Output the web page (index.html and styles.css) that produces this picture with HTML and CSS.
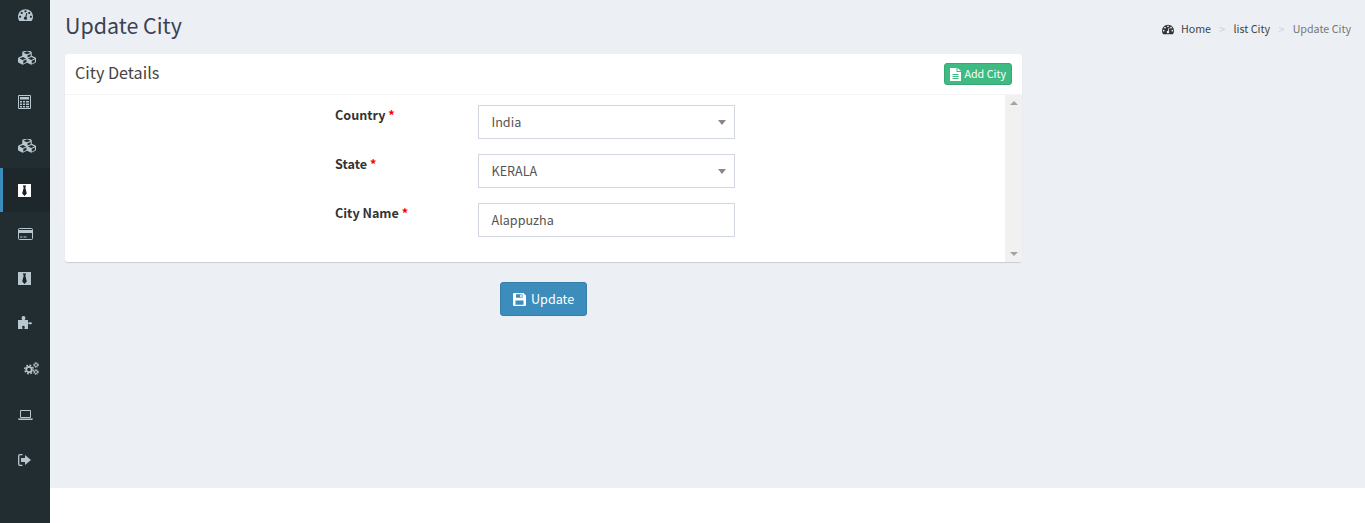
FILE: index.html
```html
<!DOCTYPE html>
<html lang="en">
<head>
<meta charset="utf-8">
<title>Update City</title>
<link rel="stylesheet" href="styles.css">
</head>
<body>
<svg class="defs" width="0" height="0" aria-hidden="true">
  <symbol id="i-dash" viewBox="0 0 1792 1792"><path d="M384 1152q0-53-37.500-90.500t-90.500-37.500-90.500 37.500-37.500 90.500 37.500 90.500 90.500 37.500 90.500-37.500 37.500-90.500zm192-448q0-53-37.500-90.500t-90.500-37.500-90.500 37.500-37.500 90.500 37.500 90.500 90.500 37.500 90.500-37.500 37.500-90.500zm428 481l101-382q6-26-7.500-48.500t-38.500-29.500-48 6.500-30 39.500l-101 382q-60 5-107 43.500t-63 98.500q-20 77 20 146t117 89 146-20 89-117q16-60-6-117t-72-91zm660-33q0-53-37.500-90.500t-90.500-37.500-90.500 37.500-37.500 90.500 37.500 90.500 90.500 37.500 90.500-37.500 37.500-90.500zm-640-640q0-53-37.500-90.500t-90.500-37.500-90.500 37.500-37.500 90.500 37.500 90.500 90.500 37.500 90.500-37.500 37.500-90.500zm448 192q0-53-37.500-90.500t-90.500-37.500-90.500 37.500-37.500 90.500 37.500 90.500 90.500 37.500 90.500-37.500 37.500-90.500zm320 448q0 261-141 483-19 29-54 29h-1402q-35 0-54-29-141-221-141-483 0-182 71-348t191-286 286-191 348-71 348 71 286 191 191 286 71 348z" fill="currentColor"/></symbol>
  <symbol id="i-cubes" viewBox="0 240 2176 1530"><path fill="currentColor" fill-rule="evenodd" d="M640 1632l384-192v-314l-384 164v342zm-64-454l404-173-404-173-404 173zm1088 454l384-192v-314l-384 164v342zm-64-454l404-173-404-173-404 173zm-448-293l384-165v-266l-384 164v267zm-64-379l441-189-441-189-441 189zm1088 483v416q0 36-19 67t-52 47l-448 224q-25 14-57 14t-57-14l-448-224q-5-2-7-4-2 2-7 4l-448 224q-25 14-57 14t-57-14l-448-224q-33-16-52-47t-19-67v-416q0-38 21.500-70t56.500-48l434-186v-400q0-38 21.500-70t56.500-48l448-192q23-10 50-10t50 10l448 192q35 16 56.500 48t21.500 70v400l434 186q36 16 57 48t21 70z"/></symbol>
  <symbol id="i-calc" viewBox="0 0 14 14"><path fill="none" stroke="currentColor" d="M.5.5h12v13H.5z"/><path fill="currentColor" d="M2 2h9v2.500H2zM2 6h2v1.500H2zM5 6h2v1.500H5zM8 6h3v1.500H8zM2 8.500h2V10H2zM5 8.500h2V10H5zM8 8.500h3V10H8zM2 11h2v1.500H2zM5 11h2v1.500H5zM8 11h3v1.500H8z"/></symbol>
  <symbol id="i-tie" viewBox="0 0 13 13"><rect width="13" height="13" fill="currentColor"/><path fill="#1a2226" d="M4.800 1.500h3.400L7.300 3.700l1.500 5.800-2.300 2.500-2.300-2.500 1.500-5.800z"/></symbol>
  <symbol id="i-card" viewBox="0 0 15 12"><path fill="none" stroke="currentColor" d="M1.500.5h12a1 1 0 0 1 1 1v9a1 1 0 0 1-1 1h-12a1 1 0 0 1-1-1v-9a1 1 0 0 1 1-1z"/><path fill="currentColor" d="M1 2h13v3H1zM2 8.500h2.500v1H2zM5.500 8.500h3v1h-3z"/></symbol>
  <symbol id="i-puzzle" viewBox="0 0 14 13"><path fill="currentColor" d="M0 4h3.800c.4 0 .4-.5 0-1-.5-.8-.3-3 1.700-3s2.200 2.200 1.700 3c-.4.500-.4 1 0 1H10v2.500c0 .4.500.4 1 0 .8-.5 3-.3 3 .8s-2.200 1.300-3 .8c-.5-.4-1-.4-1 0V13H6.800c-.4 0-.5-.5-.2-1 .5-.8.100-2.300-1.300-2.300S4 11.200 4.400 12c.3.500.2 1-.2 1H0z"/></symbol>
  <symbol id="i-cogs" viewBox="0 0 15 13"><g fill="none" stroke="currentColor"><circle cx="5" cy="7.500" r="2.700" stroke-width="1.700"/><circle cx="5" cy="7.500" r="4.200" stroke-width="1.500" stroke-dasharray="1.800 1.500"/><circle cx="12" cy="3" r="1.500" stroke-width="1"/><circle cx="12" cy="3" r="2.500" stroke-width="1" stroke-dasharray="1 1"/><circle cx="12" cy="10" r="1.500" stroke-width="1"/><circle cx="12" cy="10" r="2.500" stroke-width="1" stroke-dasharray="1 1"/></g></symbol>
  <symbol id="i-laptop" viewBox="0 0 15 10"><path fill="none" stroke="currentColor" d="M2.500.5h10v7h-10z"/><path fill="currentColor" d="M0 8.500h15v.5l-1 1H1l-1-1z"/></symbol>
  <symbol id="i-out" viewBox="0 0 13 12"><path fill="none" stroke="currentColor" stroke-width="1.300" d="M4.500.7H2A1.300 1.300 0 0 0 .7 2v8A1.300 1.300 0 0 0 2 11.300h2.500"/><path fill="currentColor" d="M7 1l6 5-6 5V8H3V4h4z"/></symbol>
  <symbol id="i-file" viewBox="0 0 11 13"><path fill="currentColor" d="M0 0h6.500v4H11v9H0z"/><path fill="currentColor" d="M7.500 0L11 3H7.500z"/><path stroke="#3fba82" d="M2.500 6.500h6M2.500 8.500h6M2.500 10.500h6"/></symbol>
  <symbol id="i-save" viewBox="0 0 13 13"><path fill="currentColor" fill-rule="evenodd" d="M0 1a1 1 0 0 1 1-1h9.500L13 2.500V12a1 1 0 0 1-1 1H1a1 1 0 0 1-1-1zM3 1.200v3.600h6.500V1.200zM2.500 7.500v4.300h8V7.500z"/><path fill="currentColor" d="M7.200 1.700h1.500v2.500H7.200z"/></symbol>
</svg>
<div class="app">
  <nav class="sidebar">
    <a class="nav-item"><svg class="ic ic-dash"><use href="#i-dash"/></svg></a>
    <a class="nav-item"><svg class="ic ic-cubes"><use href="#i-cubes"/></svg></a>
    <a class="nav-item"><svg class="ic ic-calc"><use href="#i-calc"/></svg></a>
    <a class="nav-item"><svg class="ic ic-cubes"><use href="#i-cubes"/></svg></a>
    <a class="nav-item active"><svg class="ic ic-tie"><use href="#i-tie"/></svg></a>
    <a class="nav-item"><svg class="ic ic-card"><use href="#i-card"/></svg></a>
    <a class="nav-item"><svg class="ic ic-tie"><use href="#i-tie"/></svg></a>
    <a class="nav-item"><svg class="ic ic-puzzle"><use href="#i-puzzle"/></svg></a>
    <a class="nav-item item-cogs"><svg class="ic ic-cogs"><use href="#i-cogs"/></svg></a>
    <a class="nav-item item-laptop"><svg class="ic ic-laptop"><use href="#i-laptop"/></svg></a>
    <a class="nav-item item-out"><svg class="ic ic-out"><use href="#i-out"/></svg></a>
  </nav>
  <main class="main">
    <div class="content">
      <header class="page-head">
        <h1>Update City</h1>
        <ol class="crumbs">
          <li class="crumb-home"><svg class="ic-home"><use href="#i-dash"/></svg>Home</li>
          <li class="sep">&gt;</li>
          <li class="crumb-link">list City</li>
          <li class="sep">&gt;</li>
          <li class="crumb-current">Update City</li>
        </ol>
      </header>
      <section class="card">
        <div class="card-head">
          <h2>City Details</h2>
          <a class="btn-add"><svg class="ic-file"><use href="#i-file"/></svg>Add City</a>
        </div>
        <div class="card-body">
          <form class="form">
            <div class="row">
              <label>Country <span class="req">*</span></label>
              <div class="field select">India<span class="caret"></span></div>
            </div>
            <div class="row">
              <label>State <span class="req">*</span></label>
              <div class="field select">KERALA<span class="caret"></span></div>
            </div>
            <div class="row">
              <label>City Name <span class="req">*</span></label>
              <div class="field">Alappuzha</div>
            </div>
          </form>
          <div class="scrollbar"><span class="arrow up"></span><span class="arrow down"></span></div>
        </div>
      </section>
      <div class="actions">
        <button class="btn-update" type="button"><svg class="ic-save"><use href="#i-save"/></svg>Update</button>
      </div>
    </div>
  </main>
</div>
</body>
</html>
```
FILE: styles.css
```css
* { box-sizing: border-box; }
html, body { margin: 0; height: 100%; overflow: hidden; }
body {
  font-family: "Noto Sans CJK SC", "Noto Sans", sans-serif;
  font-size: 12.6px;
  color: #333;
  background: #fff;
}
.defs { display: block; height: 0; }
.app { display: flex; height: 523px; }
.sidebar { width: 50px; flex: none; background: #222d32; }
.nav-item {
  display: flex;
  align-items: center;
  height: 44px;
  padding-left: 18px;
  color: #b8c7ce;
}
.nav-item:first-child { margin-top: -8px; }
.nav-item.active {
  background: #1e282c;
  border-left: 3px solid #3c8dbc;
  padding-left: 15px;
  color: #fff;
}
.item-cogs { margin-top: 2px; padding-left: 24px; }
.item-laptop { margin-top: 3px; }
.item-out { padding-top: 2px; }
.ic { display: block; }
.ic-dash { width: 15px; height: 15px; }
.ic-cubes { width: 18px; height: 15px; }
.ic-calc { width: 14px; height: 14px; }
.ic-tie { width: 13px; height: 13px; }
.ic-card { width: 15px; height: 12px; }
.ic-puzzle { width: 14px; height: 13px; }
.ic-cogs { width: 15px; height: 13px; }
.ic-laptop { width: 15px; height: 10px; }
.ic-out { width: 13px; height: 12px; }
.main { flex: 1; min-width: 0; }
.content {
  height: 488px;
  background: #ecf0f5;
  padding: 0 14px 0 15px;
}
.page-head {
  display: flex;
  justify-content: space-between;
  align-items: center;
  height: 54px;
}
h1 {
  margin: 0 0 4px;
  font-size: 21.4px;
  font-weight: 400;
  line-height: 30px;
  color: #3b4151;
}
.crumbs {
  display: flex;
  align-items: center;
  list-style: none;
  margin: 4px 0 0;
  padding: 0;
  font-size: 10.7px;
  line-height: 16px;
  color: #444;
}
.crumb-home { display: flex; align-items: center; }
.ic-home { width: 12px; height: 12px; margin-right: 7px; color: #333; }
.sep { color: #ccc; margin: 0 8.300px; }
.crumb-current { color: #777; }
.card {
  width: 957px;
  height: 208px;
  display: flex;
  flex-direction: column;
  background: #fff;
  border-radius: 3px;
  box-shadow: 0 1px 1px rgba(0, 0, 0, .15);
}
.card-head {
  display: flex;
  justify-content: space-between;
  align-items: center;
  height: 41px;
  flex: none;
  padding: 0 10px;
  border-bottom: 1px solid #f4f4f4;
}
h2 {
  margin: 0 0 4px;
  font-size: 16.2px;
  font-weight: 400;
  line-height: 24px;
  color: #444;
}
.btn-add {
  display: flex;
  align-items: center;
  height: 22px;
  padding: 0 5px 2px 5px;
  background: #3fba82;
  border: 1px solid #37a875;
  border-radius: 3px;
  color: #fff;
  font-size: 10.7px;
  font-weight: 400;
}
.ic-file { width: 11px; height: 13px; margin: 2px 4px 0 0; }
.card-body { display: flex; flex: 1; min-height: 0; }
.form { flex: 1; padding: 10px 0 0 270px; }
.row { display: flex; align-items: flex-start; margin-bottom: 15px; }
.row label {
  width: 143px;
  font-size: 12.6px;
  font-weight: 700;
  line-height: 20px;
  color: #333;
}
.req { color: #f00; }
.field {
  position: relative;
  width: 257px;
  height: 34px;
  padding: 0 12.500px;
  border: 1px solid #d2d6e0;
  font-size: 12.6px;
  line-height: 32px;
  color: #555;
}
.caret {
  position: absolute;
  right: 8px;
  top: 14px;
  border-style: solid;
  border-width: 5px 4px 0;
  border-color: #888 transparent transparent;
}
.scrollbar {
  display: flex;
  flex-direction: column;
  justify-content: space-between;
  align-items: center;
  width: 17px;
  flex: none;
  padding: 6px 0;
  background: #f1f1f1;
}
.arrow { border-style: solid; border-color: transparent; }
.arrow.up { border-width: 0 4px 4px; border-bottom-color: #a3a3a3; }
.arrow.down { border-width: 4px 4px 0; border-top-color: #a3a3a3; }
.actions { padding: 20px 0 0 435px; }
.btn-update {
  display: flex;
  align-items: center;
  height: 34px;
  width: 87px;
  padding: 0 0 2px 12px;
  background: #3c8dbc;
  border: 1px solid #367fa9;
  border-radius: 3px;
  color: #fff;
  font-family: inherit;
  font-size: 12.6px;
  font-weight: 400;
}
.ic-save { width: 13px; height: 13px; margin: 2px 5px 0 0; }
```
